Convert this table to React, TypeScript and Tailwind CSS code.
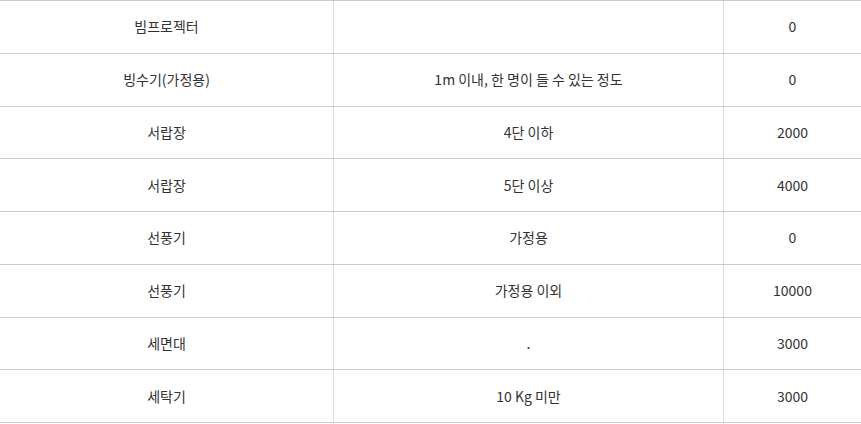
import React from "react";

const rows: [string, string, string][] = [
  ["빔프로젝터", "", "0"],
  ["빙수기(가정용)", "1m 이내, 한 명이 들 수 있는 정도", "0"],
  ["서랍장", "4단 이하", "2000"],
  ["서랍장", "5단 이상", "4000"],
  ["선풍기", "가정용", "0"],
  ["선풍기", "가정용 이외", "10000"],
  ["세면대", ".", "3000"],
  ["세탁기", "10 Kg 미만", "3000"],
];

export default function App() {
  return (
    <div
      className="w-[861px] h-[424px] bg-white text-[#333] text-[14px]"
      style={{ fontFamily: '"Noto Sans CJK KR", "Noto Sans", sans-serif' }}
    >
      <div className="border-b border-[#cccccc]">
        {rows.map((r, i) => (
          <div key={i} className="flex h-[52.75px] border-t border-[#cccccc]">
            <div className="w-[334px] flex items-center justify-center border-r border-[#dddddd]">{r[0]}</div>
            <div className="w-[390px] flex items-center justify-center border-r border-[#dddddd]">{r[1]}</div>
            <div className="flex-1 flex items-center justify-center">{r[2]}</div>
          </div>
        ))}
      </div>
    </div>
  );
}
